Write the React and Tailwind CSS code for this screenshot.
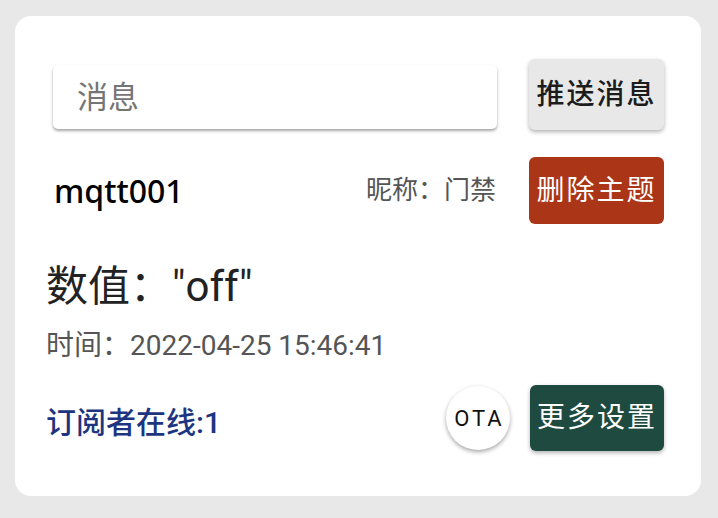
import React from 'react';

const cjk = "font-['Roboto','Noto_Sans_CJK_SC',sans-serif]";

const App = () => {
  return (
    <div className={`w-[718px] h-[518px] bg-[#e8e8e8] pt-[16px] pl-[15px] ${cjk}`}>
      <div className="w-[686px] h-[480px] bg-white rounded-[16px] pt-[43px] pl-[31px] pr-[37px] flex flex-col">
        {/* Message input row */}
        <div className="flex items-start">
          <div className="flex-1 ml-[7px] mt-[6px] h-[64px] bg-white rounded-[5px] shadow-[0_2px_3px_rgba(0,0,0,0.35)] flex items-center pl-[24px]">
            <span className="text-[31px] text-[#757575] leading-none">消息</span>
          </div>
          <button className="ml-[32px] w-[135px] h-[71px] bg-[#e8e8e8] rounded-[6px] shadow-[0_2px_4px_rgba(0,0,0,0.3)] text-[28px] tracking-[2px] font-medium text-[#1c1c1c] flex items-center justify-center">
            推送消息
          </button>
        </div>

        {/* Topic row */}
        <div className="flex items-center mt-[27px]">
          <span className="ml-[8px] text-[32px] font-medium text-black font-['Noto_Sans','Noto_Sans_CJK_SC',sans-serif]">mqtt001</span>
          <span className="ml-auto text-[26px] text-[#555]">昵称：门禁</span>
          <button className="ml-[33px] w-[135px] h-[67px] bg-[#ab3517] rounded-[6px] text-[28px] tracking-[2px] text-white flex items-center justify-center">
            删除主题
          </button>
        </div>

        {/* Value */}
        <div className="mt-[38px] text-[42px] leading-[50px] text-[#222]">数值："off"</div>
        <div className="mt-[17px] text-[28px] leading-[34px] text-[#555]">时间：2022-04-25 15:46:41</div>

        {/* Footer row */}
        <div className="flex items-center mt-[22px]">
          <span className="mt-[8px] text-[30px] font-medium text-[#1d3580]">订阅者在线:1</span>
          <button className="ml-auto w-[64px] h-[64px] rounded-full bg-white shadow-[0_2px_4px_rgba(0,0,0,0.35)] text-[22px] tracking-[3px] pl-[3px] text-[#111] flex items-center justify-center">
            OTA
          </button>
          <button className="ml-[20px] w-[134px] h-[66px] bg-[#1e4a3f] rounded-[6px] shadow-[0_2px_4px_rgba(0,0,0,0.3)] text-[28px] tracking-[2px] text-white flex items-center justify-center">
            更多设置
          </button>
        </div>
      </div>
    </div>
  );
};

export default App;
